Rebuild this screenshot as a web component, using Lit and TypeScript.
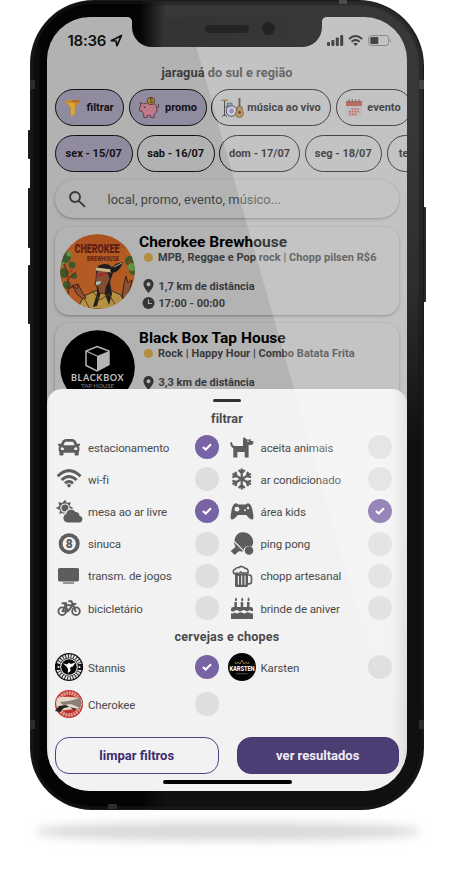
import { LitElement, html, svg, css } from "lit";
import { customElement, state } from "lit/decorators.js";
import { classMap } from "lit/directives/class-map.js";

const snowArm = svg`<path d="M13.7 12V1.4M10.6 3l3.1 3 3.1-3"/>`;

const icons: Record<string, unknown> = {
  car: svg`<g transform="translate(3 1.2) scale(.0432)"><path d="M499.99 176h-59.87l-16.64-41.6C406.38 91.63 365.57 64 319.5 64h-127c-46.06 0-86.88 27.63-103.99 70.4L71.87 176H12.01C4.2 176-1.53 183.34.37 190.91l6 24C7.7 220.25 12.5 224 18.01 224h20.07C24.65 235.73 16 252.78 16 272v48c0 16.12 6.16 30.67 16 41.93V416c0 17.67 14.33 32 32 32h32c17.67 0 32-14.33 32-32v-32h256v32c0 17.67 14.33 32 32 32h32c17.67 0 32-14.33 32-32v-54.07c9.84-11.25 16-25.8 16-41.93v-48c0-19.22-8.65-36.27-22.07-48H494c5.51 0 10.31-3.75 11.64-9.09l6-24c1.89-7.57-3.84-14.91-11.65-14.91zm-352.06-17.83c7.29-18.22 24.94-30.17 44.57-30.17h127c19.63 0 37.28 11.95 44.57 30.17L384 208H128l19.93-49.83zM96 319.8c-19.2 0-32-12.76-32-31.9S76.8 256 96 256s48 28.71 48 47.85-28.8 15.95-48 15.95zm320 0c-19.2 0-48 3.19-48-15.95S396.8 256 416 256s32 12.76 32 31.9-12.8 31.9-32 31.9z"/></g>`,
  wifi: svg`<g fill="none" stroke="currentColor" stroke-width="3"><path d="M2.700 9.200Q14-2 25.500 9.200M6.600 13Q14 6 21.600 13M10.100 16.300Q14 12.700 18 16.300"/></g><circle cx="14" cy="18.6" r="1.8"/>`,
  sun: svg`<path d="M10 .8l2 3.3 3.7-1-.9 3.8 3.6 2.2-3.6 2.2.9 3.8-3.7-1-2 3.5-2-3.5-3.8 1 1-3.8L.8 9.1l3.6-2.2-1-3.8 3.8 1z"/><circle cx="10" cy="9.1" r="4.1" fill="none" stroke="#f2f2f2" stroke-width="1.2"/><path stroke="#f2f2f2" stroke-width="1.2" d="M12.4 24a5 5 0 0 1-1.7-9.500 5.600 5.600 0 0 1 10-2.200 4.200 4.200 0 0 1 4.400 4.200 3.900 3.900 0 0 1 .2 7.500z"/>`,
  eight: svg`<circle cx="14.2" cy="11.7" r="10.5"/><circle cx="14.2" cy="11.7" r="6.7" fill="#f2f2f2"/><text x="14.2" y="16" text-anchor="middle" font-family="Roboto, sans-serif" font-size="12" font-weight="900">8</text>`,
  tv: svg`<rect x="3" y="4" width="21" height="13.4" rx="1.6"/><rect x="8" y="18.4" width="11" height="1.2"/>`,
  bike: svg`<g fill="none" stroke="currentColor" stroke-width="1.9" stroke-linejoin="round" stroke-linecap="round"><circle cx="7.2" cy="15.2" r="3.800"/><circle cx="21" cy="15.2" r="3.800"/><path d="M7.5 15.2L10.6 9.3h7L13 15.2H7.5M13 15.2L9.3 7.2H7.5h3.8M20.7 15.2L16.5 5.3h-2.4M17.5 8h3"/></g>`,
  dog: svg`<path d="M2.300 7.500q.9-1.300 1.800.2-.1 2.700 2.400 3.200H15V4.100L15.800 2l3.200 2.500h3l.8-.8v2.100l2.700.6v1.700q-.3 2.100-3.500 2h-1.400v12.500h-3.900V17H9.400v5.600H5.300V13.200Q2 11.400 2.300 7.500z"/><circle cx="20" cy="6.200" r=".8" fill="#f2f2f2"/>`,
  snow: svg`<g fill="none" stroke="currentColor" stroke-width="2.200">${[0, 60, 120, 180, 240, 300].map((a) => svg`<g transform=${`rotate(${a} 13.7 12)`}>${snowArm}</g>`)}</g>`,
  game: svg`<path d="M7 4.400q1.700-.4 3.300 1.100h7.500Q19.400 4 21 4.400q2.200.6 3.400 6.400 1.600 7.600.7 9.200-1.600 1.500-4.400-1.300L18.300 16H9.800l-2.500 2.700Q4.500 21.500 2.900 20q-.9-1.600.7-9.200Q4.800 5 7 4.400z"/><circle cx="9" cy="10.200" r="2.400" fill="#f2f2f2"/><circle cx="17" cy="11.300" r="1" fill="#f2f2f2"/><circle cx="20" cy="9" r="1.200" fill="#f2f2f2"/>`,
  pong: svg`<path d="M6.900 6.500C9-1 17-1.200 21.500 2.500 26 6.500 26 11 23.800 14.500Q17 12.600 15.600 17.900L6.400 8.800zM5.600 9.800L15.600 19.400 10.800 19.200 6.700 23 2.700 19 7.400 14.900z"/><circle cx="21" cy="18.500" r="4.300"/>`,
  beer: svg`<path d="M7 9.400h13v12.200q0 1.300-1.300 1.300H8.300Q7 22.900 7 21.600z"/><path fill="none" stroke="currentColor" stroke-width="1.600" d="M20 11h1.200q2.300 0 2.300 2.400v4q0 2.500-2.500 2.500h-1M6.200 9.800Q3.800 6.500 7.400 5.100 8.500 3.200 11 3.600 14 1 16.600 4.100q4.100.2 3.500 4.900H14q-1-2-2.300 0-.4 2.500-2.300 1L9.200 9z"/><path stroke="#f2f2f2" stroke-width="1.100" d="M10.400 12v8.700M13.700 11.500v9.200M17 11.500v9.200"/>`,
  cake: svg`<path d="M6.400 6h2.500v6H6.400zM12.700 6h2.500v6h-2.500zM19 6h2.500v6H19zM7.900 1.200q2.200 3 .1 4Q5.800 4.700 7.900 1.200zM14.200 1.200q2.200 3 .1 4-2.200-.5-.1-4zM20.500 1.200q2.200 3 .1 4-2.200-.5-.1-4zM5.300 11h17.400q2.300 0 2.300 2.300v1.800q-2 .4-3.500-1-2 2.200-4 .6-1.600-1.200-3.500 0-2 1.300-3.700 0-2-1.400-3.800.2-2 1.200-3.500.2v-1.800Q3 11 5.300 11zM3 17.200q2 .8 3.900-.8 2 1.900 3.800.4 1.800-1.100 3.600 0 2 1.300 3.800 0 2-1.200 3.500.2 1.500.8 3.400.2V23H3z"/>`,
};

const ring = (bg: string, fg: string) => svg`
  <circle cx="14" cy="14" r="14" fill=${bg}/>
  <circle cx="14" cy="14" r="11" fill="none" stroke=${fg} stroke-width="3.600" stroke-dasharray="1.900 .8"/>`;

const brands: Record<string, unknown> = {
  Stannis: svg`${ring("#111", "#ddd")}<path d="M0 11h5v6H0zM23 11h5v6h-5z" fill="#111"/><circle cx="14" cy="14" r="8.800" fill="#eee"/><circle cx="14" cy="14" r="7.800" fill="#080808"/><path fill="#fff" d="M7.900 10.300l4 1.200 2-1.700 2 1.300 4.500-1.700-2.600 4-2.700 1.200.5 3.400-2.800 2 .2-4.200-1.600-2.400z"/><circle cx="3.500" cy="14" r="1" fill="#fff"/><circle cx="24.500" cy="14" r="1" fill="#fff"/>`,
  Cherokee: svg`${ring("#c1302c", "#e0a093")}<path fill="#e4d6c8" d="M2 8Q14 5 26 9l1.500 5Q25 19 20 19L3 21 1 13z"/><path fill="#887f76" d="M5 12l9-1 11-3 2 5-2 5-9-4-8 1z"/><path fill="#222" d="M0 21l4-5 7-1 3 2-5 1-4 4zM15 17l7 2-3 1z"/>`,
  Karsten: svg`<circle cx="14" cy="14" r="14" fill="#040404"/><path d="M8.500 11l1.500-2 2 2 2-4 2 4 2-2 1.500 2M7 9l1 2M21 9l-1 2" fill="none" stroke="#b0814b" stroke-width=".9"/><text x="1.500" y="18.300" font-family="Roboto" font-weight="700" font-size="7" textLength="25" lengthAdjust="spacingAndGlyphs" fill="#fff">KARSTEN</text><path stroke="#8b6238" stroke-width="1" stroke-dasharray="1.500 .5" d="M8.500 20.700h11"/>`,
};

const chipIcons: Record<string, unknown> = {
  funnel: svg`<svg viewBox="0 0 16 17" width="16" height="17"><path fill="#c78b2b" d="M.5 1h14v2.600L9.600 8.400v7L5.500 17V8.400L.5 3.500z"/><path fill="#e0b02c" d="M2.500 4h7v12L6 17V8.300z" opacity=".8"/><path fill="#b56b2e" d="M6.500 1h8v2.300h-8z"/></svg>`,
  pig: svg`<svg viewBox="0 0 22 22" width="22" height="22"><path fill="#c0788b" stroke="#4d333c" stroke-width=".8" d="M2 5.500l3.500 1.300Q12 4 16.500 7q3 2 2.500 6-.4 2.600-2.700 4.300v3.200h-3.600v-2H9.300v2H5.700V17L4 14.500 1.500 13.600V10L3 9.200z"/><path fill="none" stroke="#4d333c" d="M19 11q2.600-1 1.300-4"/><circle cx="13" cy="4" r="3.700" fill="#bd8f3c" stroke="#423620" stroke-width=".8"/><text x="13" y="6.300" font-size="6.500" font-family="Roboto" font-weight="700" text-anchor="middle" fill="#46361b">$</text><circle cx="6.500" cy="10.300" r=".8" fill="#33242a"/></svg>`,
  band: svg`<svg viewBox="0 0 23 21" width="23" height="21"><path d="M.5 3.500h6M3.500 3v16M1 20l2.500-3L6 20M3.500 10h4" stroke="#222" fill="none"/><path fill="#a87e34" d="M1 2.200h6v1.600H1z"/><circle cx="10.500" cy="14" r="5.300" fill="#b7c2cf" stroke="#23283a"/><circle cx="10.500" cy="14" r="2.400" fill="#8d6ba1"/><path fill="#668aa0" stroke="#26303d" stroke-width=".6" d="M6 6h5v3H6z"/><path stroke="#4d321c" stroke-width="1.800" d="M18.500 1v12"/><path fill="#b4792b" stroke="#3c2916" stroke-width=".7" d="M16 10q2.500-1.500 5 0 .5 2 0 3 2 2 1.300 4.500-1 3-4 3-3.200 0-3.800-3-.2-2.500 1.500-4.500z"/><circle cx="18.400" cy="15.200" r="1.500" fill="#3c2916"/></svg>`,
  calendar: svg`<svg viewBox="0 0 16 18" width="16" height="18"><path fill="#aaa" d="M0 3h16v14.500H0z"/><path fill="#a8443a" d="M0 2h16v5H0z"/><path stroke="#444" stroke-width="1.100" d="M3 .2v3.500M6.300.2v3.500M9.700.2v3.500M13 .2v3.500"/><path stroke="#b33c33" stroke-width="1.700" stroke-dasharray="1.800 1" d="M5.500 10H13M3 12.700h10M3 15.300h7.500"/></svg>`,
};

const pin = html`<svg class="mini" viewBox="0 0 13 14"><path fill="#353535" fill-rule="evenodd" d="M6.500 0a5.100 5.100 0 0 1 5.100 5.100C11.600 8.700 6.500 14 6.500 14S1.400 8.700 1.400 5.100A5.100 5.100 0 0 1 6.500 0zm0 3.200a2 2 0 1 0 0 4 2 2 0 0 0 0-4z"/></svg>`;
const clock = html`<svg class="mini" viewBox="0 0 13 14"><circle cx="6.500" cy="7" r="6" fill="#353535"/><path d="M6.500 3.500V7.500h3.300" stroke="#b3b3b3" stroke-width="1.100" fill="none"/></svg>`;

const cherokeeArt = html`<svg class="avatar" viewBox="0 0 75 75"><defs><clipPath id="disc"><circle cx="37.500" cy="37.500" r="37.300"/></clipPath></defs>
<g clip-path="url(#disc)"><path fill="#b25b22" d="M0 0h75v75H0z"/><path fill="#a84b20" d="M18 0h57v14H14z" opacity=".6"/>
<g fill="#3b5a2a"><circle cx="5" cy="23" r="6"/><circle cx="12" cy="31" r="3.500"/><circle cx="4" cy="39" r="5"/><circle cx="14" cy="42" r="3"/><circle cx="7" cy="51" r="4"/><circle cx="70" cy="27" r="5"/><circle cx="74" cy="36" r="5"/></g>
<g fill="#609442"><circle cx="9" cy="20" r="2.500"/><circle cx="72" cy="33" r="4"/><circle cx="3" cy="30" r="2"/></g>
<path d="M4 30q7 15 3 38M7 46l9-8M8 55l9-5" stroke="#63301c" stroke-width="1.500" fill="none"/>
<g fill="#b03323"><circle cx="11" cy="37" r="1.500"/><circle cx="8" cy="44" r="1.500"/><circle cx="69" cy="28" r="1.300"/></g>
<path fill="#b49143" stroke="#3e291d" d="M17 75l7-13 11-5 15-1 11 5 6 14z"/>
<path fill="#231e1f" d="M36 40q-1-10 9-10 8 0 8 9l-3 9 2 12-3 11-5-13H41l-4 14-4 1 4-14z"/>
<path fill="#844e35" stroke="#3c2118" stroke-width=".7" d="M37 37l10-1 3 9-4 8-1 7-6-1-1-6-3-2z"/>
<path stroke="#ccb789" stroke-width="3" d="M36 35l16 2"/><path stroke="#a02d28" stroke-width="2.500" d="M36.500 41.500l10-2"/><path fill="#a4c5c6" d="M36 48l5-1-1 3-4 1z"/>
<path fill="#1c1b1c" d="M50 37q2-7 13-9-3 10-11 11z"/><path stroke="#aaa" d="M54 33l8-4"/>
<path fill="#8d5338" stroke="#3c2118" d="M62 63l2-13 2-8 2 7 4-3-2 9-4 10zM23 65l-6-5-5-9 5 4 1-5 4 8 4 6z"/>
<path d="M32 57l8 9 9-6 8 14M24 64l6 11" stroke="#584421" fill="none"/></g>
<text x="14.500" y="19" font-family="Roboto" font-weight="900" font-size="12" textLength="45" lengthAdjust="spacingAndGlyphs" fill="#5b1d16">CHEROKEE</text>
<text x="27" y="27.300" font-family="Roboto" font-weight="700" font-size="7.500" textLength="32" lengthAdjust="spacingAndGlyphs" fill="#5b1d16">BREWHOUSE</text></svg>`;

const blackboxArt = html`<svg class="avatar" viewBox="0 0 75 75"><circle cx="37.500" cy="37.500" r="37.300" fill="#000"/>
<path fill="#000" stroke="#b5b5b5" stroke-width="1.500" d="M37 16.500l12 4.500v13.500L37 41l-11-5.500V21z"/><path fill="#b5b5b5" d="M37 26l12-5v13.500L37 41z"/><path fill="none" stroke="#b5b5b5" stroke-width="1.300" d="M26 21l11 5"/>
<text x="11" y="50.500" font-family="Lato" font-weight="700" font-size="9" textLength="52.500" fill="#c4c4c4">BLACKBOX</text><text x="21" y="58.300" font-family="Lato" font-size="6" textLength="33" fill="#666">TAP HOUSE</text></svg>`;

interface Option { id: string; label: string; }
const options: Option[] = [
  { id: "car", label: "estacionamento" }, { id: "dog", label: "aceita animais" },
  { id: "wifi", label: "wi-fi" }, { id: "snow", label: "ar condicionado" },
  { id: "sun", label: "mesa ao ar livre" }, { id: "game", label: "área kids" },
  { id: "eight", label: "sinuca" }, { id: "pong", label: "ping pong" },
  { id: "tv", label: "transm. de jogos" }, { id: "beer", label: "chopp artesanal" },
  { id: "bike", label: "bicicletário" }, { id: "cake", label: "brinde de aniver" },
];

@customElement("app-root")
export class AppRoot extends LitElement {
  @state() private selected = new Set(["car", "sun", "game", "Stannis"]);

  static styles = css`
    :host { display: block; position: relative; width: 452px; height: 870px; overflow: hidden; background: #fff; font-family: Roboto, "Liberation Sans", sans-serif; }
    * { box-sizing: border-box; }
    svg { display: block; flex: none; }
    .shadow { position: absolute; left: 36px; top: 823px; width: 384px; height: 17px; border-radius: 50%/60%; background: #d9d9d9; filter: blur(5px); box-shadow: 0 0 4px #ddd; }
    .key { position: absolute; width: 4px; background: #17191b; border-radius: 1px; }
    .k1 { left: 27.500px; top: 130px; height: 29px; } .k2 { left: 27.500px; top: 188px; height: 60px; }
    .k3 { left: 27.500px; top: 265px; height: 59px; } .k4 { left: 422px; top: 207px; height: 95px; background: #292929; }
    .phone { position: relative; width: 394px; height: 810px; margin-left: 30px; padding: 17px 17px 19px; border-radius: 64px 66px 62px 62px; background: linear-gradient(90deg, #0d0f10 0 8px, #040404 11px 110px, transparent 136px), linear-gradient(#383838 0 120px, #2d2d2d 290px, #0f0f0f 450px, #111); box-shadow: inset 0 0 0 1px #191b1b, inset 0 0 0 4px #26282859, inset 0 0 2px 5px #0004; }
    .band { position: absolute; background: #2c2d2e; width: 5px; height: 9px; }
    .b1 { left: 0; top: 80px; } .b2 { right: 0; top: 80px; background: #444; } .b3 { left: 0; top: 720px; } .b4 { right: 0; top: 720px; }
    .b5 { left: 78px; bottom: 1px; width: 9px; height: 5px; } .b6 { left: 309px; top: 0; width: 8px; height: 4px; background: #4b4b4b; }
    .screen { position: relative; width: 360px; height: 774px; overflow: hidden; border-radius: 43px; background: #b2b2b2; }
    .notch { position: absolute; z-index: 4; left: 84.500px; top: 0; width: 190px; height: 29.500px; border-radius: 0 0 20px 20px; background: linear-gradient(90deg, #040404 8px, #333 32px, #383838); }
    .notch::before, .notch::after { content: ""; position: absolute; top: 0; width: 4px; height: 4px; }
    .notch::before { left: -4px; background: radial-gradient(circle at 0 100%, transparent 3.500px, #040404 4px); }
    .notch::after { right: -4px; background: radial-gradient(circle at 100% 100%, transparent 3.500px, #383838 4px); }
    .speaker { position: absolute; left: 73.500px; top: 7.500px; width: 44px; height: 8px; border-radius: 4px; background: #242424; }
    .camera { position: absolute; left: 130px; top: 5px; width: 13px; height: 13px; border-radius: 50%; background: #232323; }
    .status { display: flex; align-items: center; height: 46px; padding: 0 15px 0 20.500px; color: #101010; }
    .time { font: 600 15px/20px Inter, sans-serif; letter-spacing: -.25px; padding-top: 1px; }
    .nav { margin-left: 3.500px; } .signals { margin-left: auto; }
    .region { height: 19px; line-height: 19px; text-align: center; font-size: 12.800px; font-weight: 700; color: #3c3c3c; letter-spacing: .04px; }
    .chips { display: flex; gap: 4.500px; padding-left: 8px; height: 37px; margin-top: 7px; overflow: hidden; }
    .chips.dates { margin-top: 9px; }
    .chip { flex: none; display: flex; align-items: center; justify-content: center; gap: 5px; height: 37px; border: 1px solid #111; border-radius: 18.500px; font-size: 11px; font-weight: 700; color: #111; white-space: nowrap; }
    .chip.on { background: #918b9f; }
    .w69 { width: 69px; } .w78 { width: 78px; } .w120 { width: 120px; gap: 3px; } .w76 { width: 76px; } .w81 { width: 81px; } .w77 { width: 77.500px; }
    .search { display: flex; align-items: center; height: 38px; margin: 8px 8px 0; padding-left: 13px; gap: 20.500px; border-radius: 19px; box-shadow: 0 1px 3px #0005; color: #444; font-size: 12.900px; letter-spacing: .02px; background: #b3b3b3; }
    .card { display: flex; height: 88px; margin: 8.500px 8px 0; padding: 7px 5px 0; gap: 4px; border-radius: 14px; box-shadow: 0 1px 3px #0005; background: #b3b3b3; color: #3a3a3a; font-size: 11px; font-weight: 700; }
    .avatar { width: 75px; height: 75px; }
    .name { font-size: 15.500px; line-height: 16px; letter-spacing: .02px; color: #000; }
    .info { display: flex; flex-direction: column; white-space: nowrap; }
    .line { display: flex; align-items: center; height: 17.300px; gap: 4px; padding-left: 2.500px; }
    .line.tags { height: 15px; margin-bottom: 13px; letter-spacing: .04px; gap: 3.500px; }
    .dot { width: 9px; height: 9px; margin: 0 2px; border-radius: 50%; background: #b68d3b; }
    .mini { width: 13px; height: 14px; }
    .sheet { position: absolute; left: 0; top: 372px; width: 360px; height: 402px; padding: 9.500px 8px 0; border-radius: 15px 15px 0 0; background: linear-gradient(90deg, #dedede 0, #f2f2f2 3px 338px, #f0f0f0 346px, #dedede); color: #4a4a4a; }
    .handle { width: 28px; height: 3.500px; margin: 0 auto; border-radius: 2px; background: #303030; }
    .heading { height: 29px; line-height: 33px; text-align: center; font-size: 12.600px; font-weight: 700; letter-spacing: .08px; }
    .grid { display: grid; grid-template-columns: 172.500px 172.500px; grid-auto-rows: 32.200px; }
    .brands { grid-auto-rows: 37px; }
    .option { display: flex; align-items: center; padding: 0; border: 0; background: none; font: 400 11.500px Roboto, sans-serif; letter-spacing: -.12px; color: #4a4a4a; text-align: left; }
    .option svg.icon { width: 28px; height: 24px; margin-right: 5px; fill: currentColor; color: #5d5d5d; overflow: visible; }
    .option svg.brand { width: 28px; height: 28px; margin-right: 5px; }
    .label { width: 107px; white-space: nowrap; padding-top: 1px; }
    .check { display: grid; place-items: center; width: 24px; height: 24px; border-radius: 50%; background: #dedede; }
    .check.on { background: #7863a4; }
    .heading.second { height: 24.500px; line-height: 26px; letter-spacing: .18px; }
    .actions { display: flex; justify-content: space-between; margin-top: 14px; width: 344px; }
    .button { width: 163.500px; height: 37px; padding: 0; border: 1px solid #524180; border-radius: 14px; background: transparent; color: #3e2b70; font: 700 13px Roboto, sans-serif; }
    .button.primary { width: 162.500px; background: #4d3d75; color: #f1edf8; border-color: #493772; }
    .home { width: 129px; height: 4px; margin: 6.500px auto 0; border-radius: 2px; background: #000; }
    .glare { position: absolute; z-index: 3; inset: 0; pointer-events: none; clip-path: polygon(149px 29px, 141px 0, 100% 0, 100% 767px, 247px 372px); background: linear-gradient(#ffffff38 0 510px, #ffffff08 690px, transparent 720px); }
  `;

  private toggle(id: string) {
    const next = new Set(this.selected);
    next.has(id) ? next.delete(id) : next.add(id);
    this.selected = next;
  }

  private option(o: Option, art: unknown) {
    const on = this.selected.has(o.id);
    return html`<button class="option" @click=${() => this.toggle(o.id)}>${art}<span class="label">${o.label}</span>
      <span class=${classMap({ check: true, on })}>${on ? html`<svg viewBox="0 0 12 10" width="12" height="10"><path d="M2 5l2.700 2.600L10 2.200" fill="none" stroke="#fff" stroke-width="2.100"/></svg>` : ""}</span></button>`;
  }

  private card(name: string, tags: string, distance: string, art: unknown) {
    return html`<div class="card">${art}<div class="info"><div class="name">${name}</div>
      <div class="line tags"><span class="dot"></span><span>${tags}</span></div>
      <div class="line">${pin}<span>${distance}</span></div>
      <div class="line">${clock}<span>17:00 - 00:00</span></div></div></div>`;
  }

  render() {
    return html`
      <div class="shadow"></div>
      <i class="key k1"></i><i class="key k2"></i><i class="key k3"></i><i class="key k4"></i>
      <div class="phone">
        <i class="band b1"></i><i class="band b2"></i><i class="band b3"></i><i class="band b4"></i><i class="band b5"></i><i class="band b6"></i>
        <div class="screen">
          <div class="notch"><i class="speaker"></i><i class="camera"></i></div>
          <div class="status"><span class="time">18:36</span>
            <svg class="nav" width="13" height="13" viewBox="0 0 13 13"><path d="M1.300 6.700L11.500 1.400 7 11.700 6 7z" fill="none" stroke="#101010" stroke-width="1.700" stroke-linejoin="round"/></svg>
            <svg class="signals" width="67" height="13" viewBox="0 0 67 13" fill="#101010"><rect x="2" y="8" width="3" height="4" rx="1"/><rect x="6.400" y="6" width="3" height="6" rx="1"/><rect x="10.800" y="3.500" width="3" height="8.500" rx="1"/><rect x="15.200" y="1" width="3" height="11" rx="1"/>
              <g fill="none" stroke="#101010" stroke-width="2"><path d="M24 5q6.500-6 13.200 0M26.500 7.800q4-3.600 8.200 0"/></g><path d="M28.300 9.700q2.300-1.700 4.600 0l-2.300 2.300z"/><rect x="43.700" y="1.500" width="20" height="10" rx="2.800" fill="none" stroke="#555" stroke-width=".8"/><rect x="45.300" y="3" width="8" height="7" rx="1.200"/><path d="M65 5v3.400q1.800-1.700 0-3.400z" fill="#555"/></svg>
          </div>
          <div class="region">jaraguá do sul e região</div>
          <div class="chips"><div class="chip on w69">${chipIcons.funnel}filtrar</div><div class="chip on w78">${chipIcons.pig}promo</div><div class="chip w120">${chipIcons.band}música ao vivo</div><div class="chip w76">${chipIcons.calendar}evento</div></div>
          <div class="chips dates"><div class="chip on w77">sex - 15/07</div><div class="chip w77">sab - 16/07</div><div class="chip w81">dom - 17/07</div><div class="chip w77">seg - 18/07</div><div class="chip w77">ter - 19/07</div></div>
          <div class="search"><svg width="19" height="19" viewBox="0 0 19 19"><path fill="none" stroke="#383838" stroke-width="1.900" d="M12 7a5 5 0 1 1-10 0 5 5 0 0 1 10 0zm-1.500 3.600l6.500 6.300"/></svg><span>local, promo, evento, músico...</span></div>
          ${this.card("Cherokee Brewhouse", "MPB, Reggae e Pop rock | Chopp pilsen R$6", "1,7 km de distância", cherokeeArt)}
          ${this.card("Black Box Tap House", "Rock | Happy Hour | Combo Batata Frita", "3,3 km de distância", blackboxArt)}
          <div class="sheet">
            <div class="handle"></div>
            <div class="heading">filtrar</div>
            <div class="grid">${options.map((o) => this.option(o, html`<svg class="icon" viewBox="0 0 28 24">${icons[o.id]}</svg>`))}</div>
            <div class="heading second">cervejas e chopes</div>
            <div class="grid brands">${["Stannis", "Karsten", "Cherokee"].map((id) => this.option({ id, label: id }, html`<svg class="brand" viewBox="0 0 28 28">${brands[id]}</svg>`))}</div>
            <div class="actions"><button class="button">limpar filtros</button><button class="button primary">ver resultados</button></div>
            <div class="home"></div>
          </div>
          <div class="glare"></div>
        </div>
      </div>`;
  }
}
